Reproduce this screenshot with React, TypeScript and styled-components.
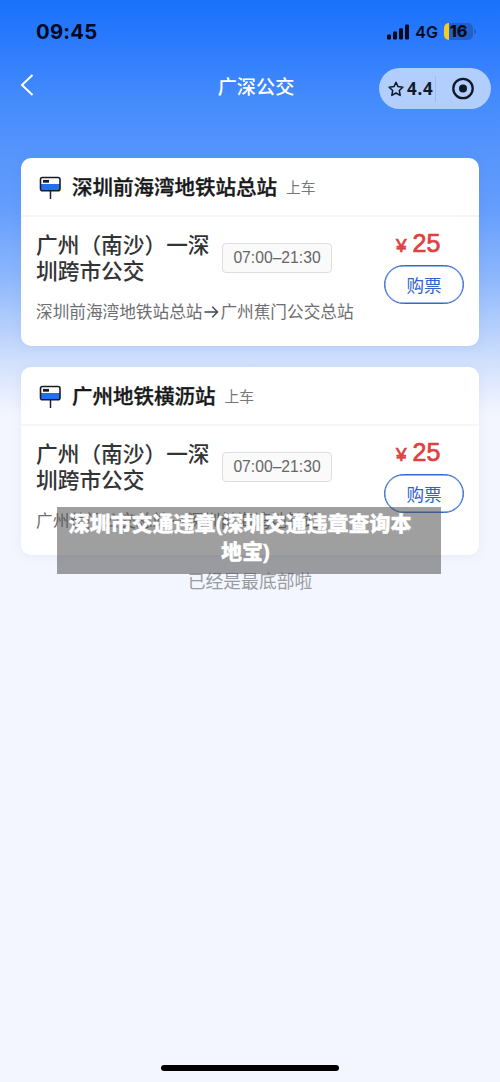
import React from "react";
import styled, { createGlobalStyle } from "styled-components";

const GlobalStyle = createGlobalStyle`
  * { box-sizing: border-box; }
  body {
    margin: 0;
    font-family: "Liberation Sans", "Noto Sans CJK SC", sans-serif;
    background: #f3f6fe;
  }
`;

const Page = styled.div`
  position: relative;
  width: 500px;
  height: 1082px;
  overflow: hidden;
  display: flex;
  flex-direction: column;
  background: linear-gradient(
    180deg,
    #1872fc 0px,
    #2f7cfd 50px,
    #448bfc 100px,
    #5896fc 160px,
    #659efc 210px,
    #8fb8fc 280px,
    #c3d8fc 345px,
    #dbe6fd 375px,
    #f3f6fe 415px,
    #f3f6fe 100%
  );
`;

const StatusBar = styled.header`
  height: 64px;
  flex: none;
  display: flex;
  align-items: center;
  justify-content: space-between;
  padding: 0 24px 1px 36px;
  color: #03091f;
  font-family: Inter, sans-serif;
`;

const Clock = styled.span`
  font-size: 20.3px;
  font-weight: 700;
  letter-spacing: 0.25px;
`;

const StatusIcons = styled.div`
  display: flex;
  align-items: center;
`;

const Network = styled.span`
  margin: 1px 6px 0 6px;
  font-size: 16px;
  font-weight: 600;
`;

const Battery = styled.div`
  display: flex;
  align-items: center;
`;

const BatteryBody = styled.div`
  width: 29px;
  height: 17px;
  border-radius: 5px;
  background: linear-gradient(90deg, #f5cb28 5px, #2260c5 5px);
  font-size: 16px;
  font-weight: 800;
  line-height: 17px;
  text-align: center;
`;

const BatteryCap = styled.i`
  width: 2px;
  height: 5px;
  margin-left: 1px;
  border-radius: 0 2px 2px 0;
  background: #2260c5;
`;

const NavBar = styled.nav`
  height: 94px;
  flex: none;
  display: grid;
  grid-template-columns: 120px 1fr 120px;
  align-items: start;
  padding: 4px 9px 0 20px;
`;

const BackButton = styled.button`
  border: 0;
  padding: 6px 0 0;
  background: none;
  display: flex;
  color: #fff;
`;

const NavTitle = styled.h1`
  margin: 6px 0 0 1px;
  color: #fff;
  text-align: center;
  font-size: 19.2px;
  line-height: 28px;
  font-weight: 500;
`;

const Capsule = styled.div`
  width: 112px;
  height: 41px;
  margin-left: 8px;
  border-radius: 21px;
  background: #b1cefc;
  color: #101827;
  display: flex;
  align-items: center;
`;

const Rating = styled.div`
  width: 57px;
  height: 26px;
  padding-left: 9px;
  border-right: 1px solid #9cbcf0;
  display: flex;
  align-items: center;
  gap: 3px;
  font: 700 17px/26px "Noto Sans", sans-serif;
  letter-spacing: 0.8px;
`;

const Target = styled.div`
  flex: 1;
  display: flex;
  justify-content: center;
  padding-right: 1px;
`;

const CardList = styled.main`
  display: flex;
  flex-direction: column;
  gap: 21px;
  padding: 0 21px;
`;

const Card = styled.article`
  height: 188px;
  border-radius: 10px;
  background: #fff;
  box-shadow: 0 1px 12px rgba(60, 100, 180, 0.08);
`;

const CardHeader = styled.header`
  height: 59px;
  border-bottom: 2px solid #f6f6f7;
  display: flex;
  align-items: center;
  padding-left: 18px;
`;

const StopName = styled.h2`
  margin: 2px 9px 0 10px;
  color: #17181a;
  font-size: 20.5px;
  line-height: 30px;
  font-weight: 500;
  -webkit-text-stroke: 0.35px #17181a;
`;

const Boarding = styled.span`
  color: #77787a;
  font-size: 14.8px;
`;

const CardBody = styled.div`
  display: flex;
  justify-content: space-between;
  padding: 16px 15px 0;
`;

const RouteInfo = styled.div`
  display: flex;
  flex-direction: column;
  width: 330px;
`;

const RouteTop = styled.div`
  display: flex;
  align-items: center;
  gap: 11px;
`;

const RouteName = styled.h3`
  width: 175px;
  margin: 0;
  color: #333436;
  font-size: 21.7px;
  line-height: 26px;
  font-weight: 500;
`;

const Hours = styled.span`
  width: 110px;
  height: 30px;
  margin-top: -2px;
  border: 1px solid #dedede;
  border-radius: 4px;
  background: #fafafa;
  color: #656668;
  text-align: center;
  font-size: 15.7px;
  line-height: 28px;
`;

const RoutePath = styled.p`
  margin: 15px 0 0;
  display: flex;
  align-items: center;
  color: #6d6e70;
  font-size: 16.65px;
  line-height: 26px;
  white-space: nowrap;
`;

const Purchase = styled.div`
  width: 80px;
  display: flex;
  flex-direction: column;
`;

const Price = styled.div`
  height: 34px;
  margin-top: -2px;
  padding: 0 0 0 12px;
  display: flex;
  align-items: baseline;
  gap: 6px;
  color: #dd4142;
  font-size: 25px;
  line-height: 24px;
  font-weight: 400;
  -webkit-text-stroke: 0.7px #dd4142;
`;

const Currency = styled.span`
  font-size: 19px;
`;

const BuyButton = styled.button`
  width: 80px;
  height: 39px;
  padding: 0;
  border: 1px solid #3068d0;
  box-shadow: inset 0 0 0 0.4px #3068d0;
  border-radius: 20px;
  background: #fff;
  color: #2d65cd;
  font: 400 17.6px/34px "Noto Sans CJK SC", sans-serif;
`;

const EndNote = styled.p`
  margin: 13px 0 0;
  color: #999ba1;
  text-align: center;
  font-size: 17.8px;
  line-height: 28px;
`;

const Caption = styled.div`
  position: absolute;
  left: 57px;
  top: 507px;
  width: 384px;
  height: 67px;
  padding: 3px 13px 0 6px;
  background: rgba(80, 80, 80, 0.55);
  color: #fff;
  text-align: center;
  text-indent: -11px;
  white-space: nowrap;
  font: 900 21px/28px "Liberation Sans", "Noto Sans CJK SC", sans-serif;
  -webkit-text-stroke: 0.3px #fff;
`;

const HomeIndicator = styled.div`
  width: 178px;
  height: 6px;
  margin: auto auto 11px;
  border-radius: 3px;
  background: #000;
`;

const StopSign = () => (
  <svg width="23" height="24" viewBox="0 0 23 24">
    <path d="M11.5 15v9" stroke="#17233c" strokeWidth="1.5" />
    <rect x="1.5" y="2.5" width="19.5" height="13.2" rx="2" fill="#fff" />
    <path d="M2 9h19v4.500q0 2-2 2H4q-2 0-2-2z" fill="#246ff0" />
    <rect x="1.5" y="2.5" width="19.5" height="13.2" rx="2" fill="none" stroke="#181c25" strokeWidth="1.6" />
    <path d="M4 6.3h6" stroke="#181c25" strokeWidth="2.8" />
  </svg>
);

const Arrow = () => (
  <svg width="18" height="18" viewBox="0 0 18 18" fill="none" stroke="#444548" strokeWidth="1.4">
    <path d="M2.5 8h12.5M10.3 2.8 15.5 8l-5.200 5.200" />
  </svg>
);

const stops = [
  { stop: "深圳前海湾地铁站总站", from: "深圳前海湾地铁站总站", to: "广州蕉门公交总站" },
  { stop: "广州地铁横沥站", from: "广州蕉门公交总站", to: "深圳前海湾地铁站" },
];

export default function App() {
  return (
    <Page>
      <GlobalStyle />
      <StatusBar>
        <Clock>09:45</Clock>
        <StatusIcons>
          <svg width="23" height="16" viewBox="0 0 23 16" fill="#03091f">
            <rect x="1" y="10.500" width="4" height="5" rx="1.2" />
            <rect x="7" y="7.500" width="4" height="8" rx="1.2" />
            <rect x="13" y="4.300" width="4" height="11.200" rx="1.2" />
            <rect x="19" y="0.500" width="4" height="15" rx="1.2" />
          </svg>
          <Network>4G</Network>
          <Battery>
            <BatteryBody>16</BatteryBody>
            <BatteryCap />
          </Battery>
        </StatusIcons>
      </StatusBar>
      <NavBar>
        <BackButton aria-label="返回">
          <svg width="14" height="22" viewBox="0 0 14 22" fill="none" stroke="#fff" strokeWidth="2">
            <path d="M12.5 1 2 11l10.5 10" />
          </svg>
        </BackButton>
        <NavTitle>广深公交</NavTitle>
        <Capsule>
          <Rating>
            <svg width="16" height="16" viewBox="0 0 16 16" fill="none" stroke="#101827" strokeWidth="1.5" strokeLinejoin="round">
              <path d="m8 1.2 2 4.400 4.900.6-3.600 3.300.9 4.900L8 12l-4.200 2.400.9-4.900L1.100 6.200l4.900-.6z" />
            </svg>
            4.4
          </Rating>
          <Target>
            <svg width="24" height="24" viewBox="0 0 24 24">
              <circle cx="12" cy="11.500" r="9.700" fill="none" stroke="#101827" strokeWidth="2.3" />
              <circle cx="12" cy="11.500" r="4" fill="#101827" />
            </svg>
          </Target>
        </Capsule>
      </NavBar>
      <CardList>
        {stops.map(({ stop, from, to }) => (
          <Card key={stop}>
            <CardHeader>
              <StopSign />
              <StopName>{stop}</StopName>
              <Boarding>上车</Boarding>
            </CardHeader>
            <CardBody>
              <RouteInfo>
                <RouteTop>
                  <RouteName>广州（南沙）一深圳跨市公交</RouteName>
                  <Hours>07:00–21:30</Hours>
                </RouteTop>
                <RoutePath>
                  {from}
                  <Arrow />
                  {to}
                </RoutePath>
              </RouteInfo>
              <Purchase>
                <Price>
                  <Currency>¥</Currency>25
                </Price>
                <BuyButton>购票</BuyButton>
              </Purchase>
            </CardBody>
          </Card>
        ))}
      </CardList>
      <EndNote>已经是最底部啦</EndNote>
      <HomeIndicator />
      <Caption>
        深圳市交通违章(深圳交通违章查询本
        <br />
        地宝)
      </Caption>
    </Page>
  );
}
